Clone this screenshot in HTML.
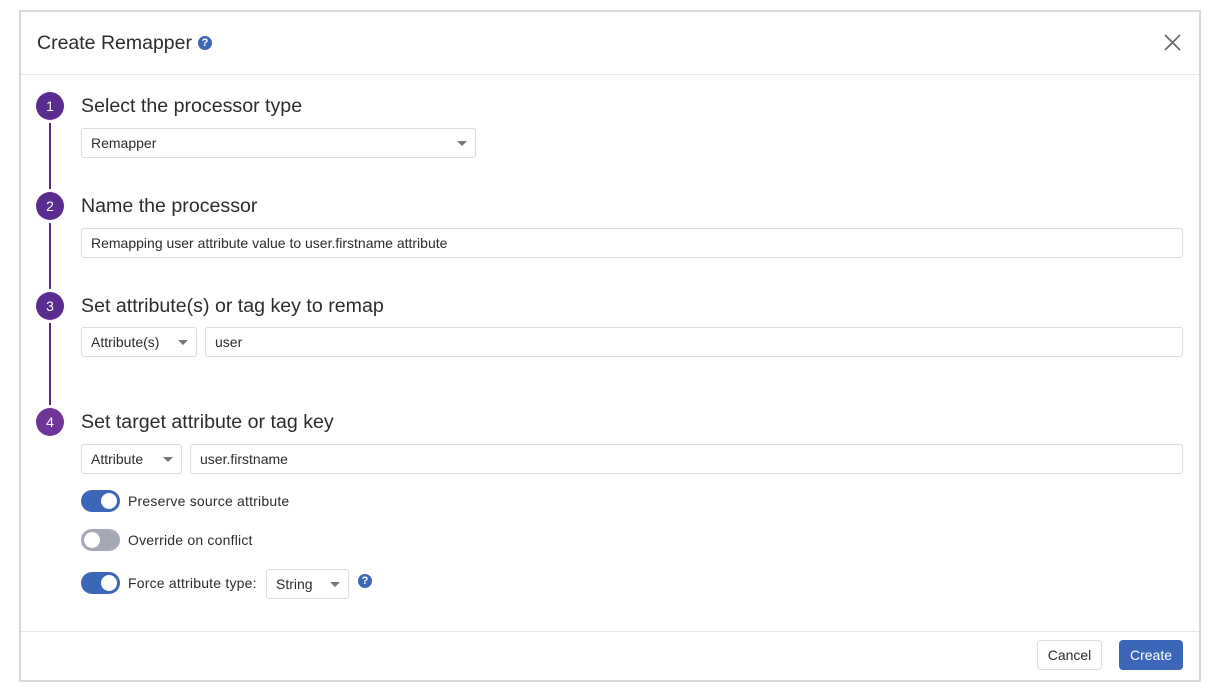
<!DOCTYPE html>
<html><head><meta charset="utf-8"><style>
*{box-sizing:border-box;margin:0;padding:0}
body{width:1208px;height:696px;background:#fff;font-family:"Liberation Sans",sans-serif;color:#2c2c2c;position:relative;overflow:hidden}
.dlg{position:absolute;left:19px;top:10px;width:1182px;height:672px;border:2px solid #d9d9d9;background:#fff}
.a{position:absolute}
.hr{position:absolute;left:21px;width:1178px;height:1px;background:#e6e6e6}
.c{position:absolute;width:28px;height:28px;border-radius:50%;background:#5a2c8f;color:#fff;font-size:14px;text-align:center;line-height:28px}
.ln{position:absolute;left:49px;width:2px;background:#5a2c8f}
.h{position:absolute;left:81px;font-size:19.6px;color:#2c2c2c}
.box{position:absolute;height:30px;border:1px solid #dcdcdc;border-radius:3px;font-size:14px;line-height:28px;padding-left:9px;color:#2c2c2c;background:#fff}
.car{position:absolute;top:12px;width:0;height:0;border-left:5px solid transparent;border-right:5px solid transparent;border-top:5px solid #777}
.tg{position:absolute;left:81px;width:39px;height:22px;border-radius:11px;background:#3c66b7}
.tg::after{content:"";position:absolute;top:3px;right:3px;width:16px;height:16px;border-radius:50%;background:#fff}
.tg.off{background:#a5a8b5}
.tg.off::after{right:auto;left:3px}
.tl{position:absolute;left:128px;font-size:14px;letter-spacing:0.2px}
.q{position:absolute;width:14px;height:14px;border-radius:50%;background:#3c66b7;color:#fff;font-size:11px;font-weight:bold;text-align:center;line-height:14px}
</style></head><body>
<div class="dlg"></div>
<div class="a" style="left:37px;top:32px;font-size:19.5px">Create Remapper</div>
<div class="q" style="left:198px;top:36px">?</div>
<svg class="a" style="left:1164px;top:34px" width="17" height="17"><path d="M1 1L16 16M16 1L1 16" stroke="#666" stroke-width="1.6"/></svg>
<div class="hr" style="top:74px"></div>

<div class="c" style="left:36px;top:92px">1</div>
<div class="ln" style="top:123px;height:66px"></div>
<div class="c" style="left:36px;top:192px">2</div>
<div class="ln" style="top:223px;height:66px"></div>
<div class="c" style="left:36px;top:292px">3</div>
<div class="ln" style="top:323px;height:82px"></div>
<div class="c" style="left:36px;top:408px;background:#6e3599">4</div>

<div class="h" style="top:95px">Select the processor type</div>
<div class="box" style="left:81px;top:128px;width:395px">Remapper<span class="car" style="left:375px"></span></div>

<div class="h" style="top:195px">Name the processor</div>
<div class="box" style="left:81px;top:228px;width:1102px">Remapping user attribute value to user.firstname attribute</div>

<div class="h" style="top:295px">Set attribute(s) or tag key to remap</div>
<div class="box" style="left:81px;top:327px;width:116px">Attribute(s)<span class="car" style="left:96px"></span></div>
<div class="box" style="left:205px;top:327px;width:978px">user</div>

<div class="h" style="top:411px">Set target attribute or tag key</div>
<div class="box" style="left:81px;top:444px;width:101px">Attribute<span class="car" style="left:81px"></span></div>
<div class="box" style="left:190px;top:444px;width:993px">user.firstname</div>

<div class="tg" style="top:490px"></div><div class="tl" style="top:493px">Preserve source attribute</div>
<div class="tg off" style="top:529px"></div><div class="tl" style="top:532px">Override on conflict</div>
<div class="tg" style="top:572px"></div><div class="tl" style="top:575px">Force attribute type:</div>
<div class="box" style="left:266px;top:569px;width:83px">String<span class="car" style="left:63px"></span></div>
<div class="q" style="left:358px;top:574px">?</div>

<div class="hr" style="top:631px"></div>
<div class="box" style="left:1037px;top:640px;width:65px;height:30px;padding:0;text-align:center;border-radius:4px">Cancel</div>
<div class="box" style="left:1119px;top:640px;width:64px;height:30px;padding:0;text-align:center;border-radius:4px;background:#3c66b7;border-color:#3c66b7;color:#fff">Create</div>
</body></html>
